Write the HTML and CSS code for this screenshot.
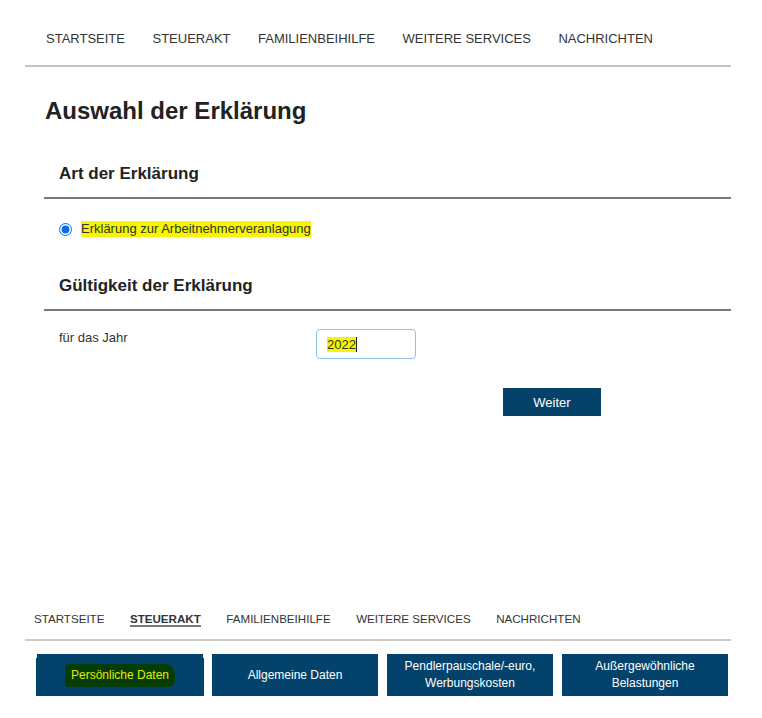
FILE: index.html
```html
<!DOCTYPE html>
<html lang="de">
<head>
    <meta charset="UTF-8">
    <meta name="viewport" content="width=device-width, initial-scale=1.0">
    <title>Auswahl der Erklärung</title>
    <link rel="stylesheet" href="styles.css">
</head>
<body>
    <div class="page">
        <nav class="topnav">
            <a href="#">STARTSEITE</a>
            <a href="#">STEUERAKT</a>
            <a href="#">FAMILIENBEIHILFE</a>
            <a href="#">WEITERE SERVICES</a>
            <a href="#">NACHRICHTEN</a>
        </nav>

        <h1>Auswahl der Erklärung</h1>

        <section class="block">
            <h2>Art der Erklärung</h2>
            <label class="radio-row">
                <input type="radio" name="art" checked>
                <span class="marker">Erklärung zur Arbeitnehmerveranlagung</span>
            </label>
        </section>

        <section class="block">
            <h2>Gültigkeit der Erklärung</h2>
            <div class="field-row">
                <span class="field-label">für das Jahr</span>
                <div class="year-input"><span class="marker">2022</span><span class="caret"></span></div>
            </div>
            <button class="btn-weiter">Weiter</button>
        </section>

        <nav class="subnav">
            <a href="#">STARTSEITE</a>
            <a href="#" class="active">STEUERAKT</a>
            <a href="#">FAMILIENBEIHILFE</a>
            <a href="#">WEITERE SERVICES</a>
            <a href="#">NACHRICHTEN</a>
        </nav>

        <div class="tiles">
            <a href="#" class="tile current"><span class="green-marker">Persönliche Daten</span></a>
            <a href="#" class="tile">Allgemeine Daten</a>
            <a href="#" class="tile">Pendlerpauschale/-euro,<br>Werbungskosten</a>
            <a href="#" class="tile">Außergewöhnliche<br>Belastungen</a>
        </div>
    </div>
</body>
</html>
```

FILE: styles.css
```css
body {
    margin: 0;
    font-family: "Liberation Sans", Arial, sans-serif;
    color: #333;
    background: #fff;
}

.page {
    width: 706px;
    margin-left: 25px;
}

a {
    color: inherit;
    text-decoration: none;
}

.topnav {
    display: flex;
    gap: 27.5px;
    padding: 30px 0 17px 21px;
    border-bottom: 2px solid #c4c4c4;
    font-size: 13px;
    line-height: 18px;
}

h1 {
    margin: 29px 0 0 20px;
    font-size: 24px;
    line-height: 30px;
    color: #222;
}

.block {
    margin-left: 19px;
}

h2 {
    margin: 37px 0 0;
    padding: 0 0 12px 15px;
    border-bottom: 2px solid #777;
    font-size: 17px;
    line-height: 22px;
    color: #222;
}

.block + .block h2 {
    margin-top: 38px;
}

.radio-row {
    display: flex;
    align-items: center;
    gap: 9px;
    margin: 22px 0 0 15px;
    font-size: 13px;
    line-height: 16px;
}

.radio-row input {
    margin: 0;
    width: 13px;
    height: 13px;
    accent-color: #0a6cf0;
}

.marker {
    background: #f6f600;
    color: #333;
}

.field-row {
    display: flex;
    align-items: flex-start;
    margin-top: 18px;
}

.field-label {
    width: 257px;
    padding-left: 15px;
    font-size: 13px;
    line-height: 18px;
}

.year-input {
    display: flex;
    align-items: center;
    box-sizing: border-box;
    width: 100px;
    height: 30px;
    padding-left: 10px;
    border: 1px solid #8fc1ec;
    border-radius: 4px;
    font-size: 13px;
}

.caret {
    width: 1px;
    height: 15px;
    background: #222;
}

.btn-weiter {
    display: block;
    width: 98px;
    height: 28px;
    margin: 29px 0 0 459px;
    border: 0;
    background: #05426a;
    color: #fff;
    font-family: inherit;
    font-size: 13px;
}

.subnav {
    display: flex;
    gap: 25.5px;
    margin-top: 195px;
    padding: 0 0 12px 9px;
    border-bottom: 2px solid #cdcdcd;
    font-size: 11.6px;
    line-height: 16px;
}

.subnav .active {
    font-weight: bold;
    border-bottom: 2px solid #777;
    line-height: 12px;
    padding-top: 2px;
}

.tiles {
    display: flex;
    gap: 9px;
    margin: 13px 0 0 12px;
}

.tile {
    display: flex;
    align-items: center;
    justify-content: center;
    width: 166px;
    height: 42px;
    background: #03426b;
    color: #fff;
    font-size: 12px;
    line-height: 17px;
    text-align: center;
}

.tile.current {
    box-shadow: 0 5px 0 -1px #fff, 0 5px 0 1px #03426b;
}

.green-marker {
    padding: 3px 6px;
    background: #043e06;
    color: #e8e800;
    border-radius: 4px 10px 6px 3px;
}
```
